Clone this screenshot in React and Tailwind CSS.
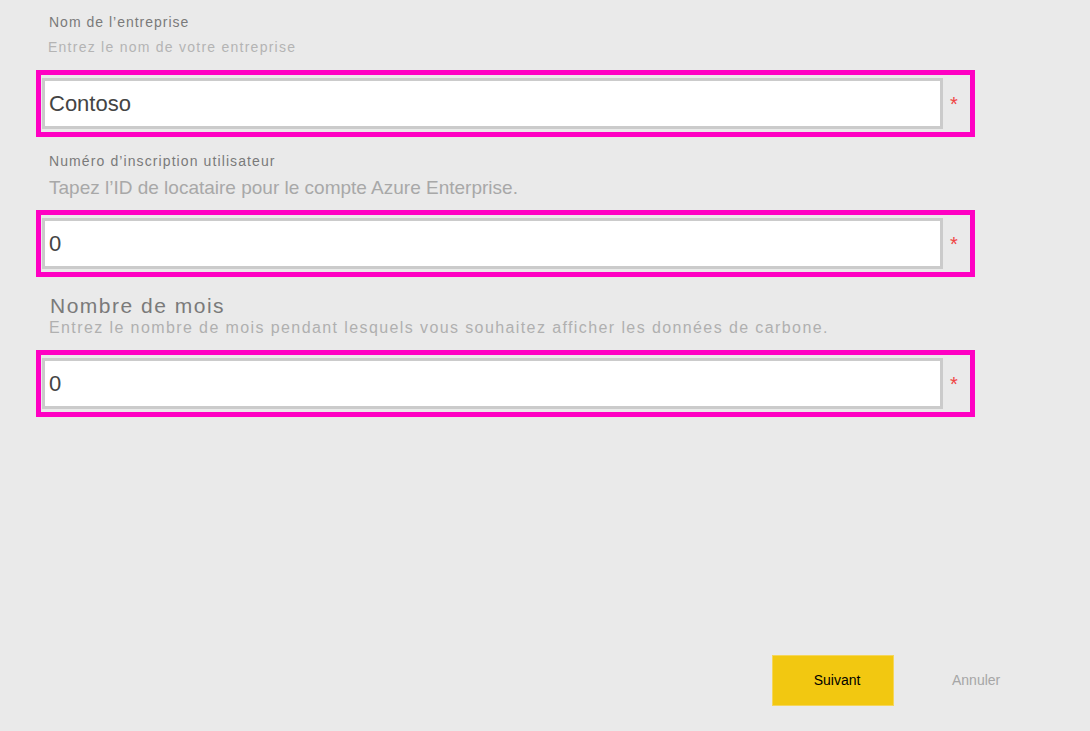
const Field = ({ value }) => {
  return (
    <div className="flex items-center w-[939px] h-[67px] border-[5px] border-[#ff00c3] pl-[1px]">
      <input
        readOnly
        defaultValue={value}
        className="w-[901px] h-[51px] border-[3px] border-[#cbcbcb] bg-white pl-[4px] text-[22px] text-[#444] outline-none"
        style={{ fontFamily: '"Liberation Sans", Arial, sans-serif' }}
      />
      <span className="ml-[7px] mt-[1px] text-[20px] leading-none text-[#f04444]">*</span>
    </div>
  )
}

export default function App() {
  return (
    <div
      className="w-[1090px] h-[731px] bg-[#eaeaea] px-[36px] overflow-hidden"
      style={{ fontFamily: '"Liberation Sans", Arial, sans-serif' }}
    >
      {/* Nom de l'entreprise */}
      <div className="pt-[12px] pl-[13px] text-[14px] leading-[20px] tracking-[1px] text-[#7a7a7a]">Nom de l’entreprise</div>
      <div className="mt-[5px] pl-[12px] text-[14px] leading-[20px] tracking-[1.25px] text-[#b4b4b4]">
        Entrez le nom de votre entreprise
      </div>
      <div className="mt-[13px]">
        <Field value="Contoso" />
      </div>

      {/* Numéro d'inscription */}
      <div className="mt-[14px] pl-[13px] text-[14px] leading-[20px] tracking-[1.1px] text-[#7a7a7a]">Numéro d’inscription utilisateur</div>
      <div className="mt-[7px] pl-[13px] text-[19px] leading-[20px] text-[#a8a8a8]">
        Tapez l’ID de locataire pour le compte Azure Enterprise.
      </div>
      <div className="mt-[12px]">
        <Field value="0" />
      </div>

      {/* Nombre de mois */}
      <div className="mt-[17px] pl-[14px] text-[21px] leading-[24px] tracking-[1.5px] text-[#7a7a7a]">Nombre de mois</div>
      <div className="pl-[13px] text-[16px] leading-[20px] tracking-[1.4px] text-[#b0b0b0]">
        Entrez le nombre de mois pendant lesquels vous souhaitez afficher les données de carbone.
      </div>
      <div className="mt-[12px]">
        <Field value="0" />
      </div>

      {/* Actions */}
      <div className="mt-[238px] ml-[736px] flex items-center">
        <button className="w-[122px] h-[51px] pl-[8px] bg-[#f2c811] border border-[#f5d65a] text-[14px] text-black">
          Suivant
        </button>
        <span className="ml-[58px] text-[14px] text-[#a6a6a6]">Annuler</span>
      </div>
    </div>
  )
}
